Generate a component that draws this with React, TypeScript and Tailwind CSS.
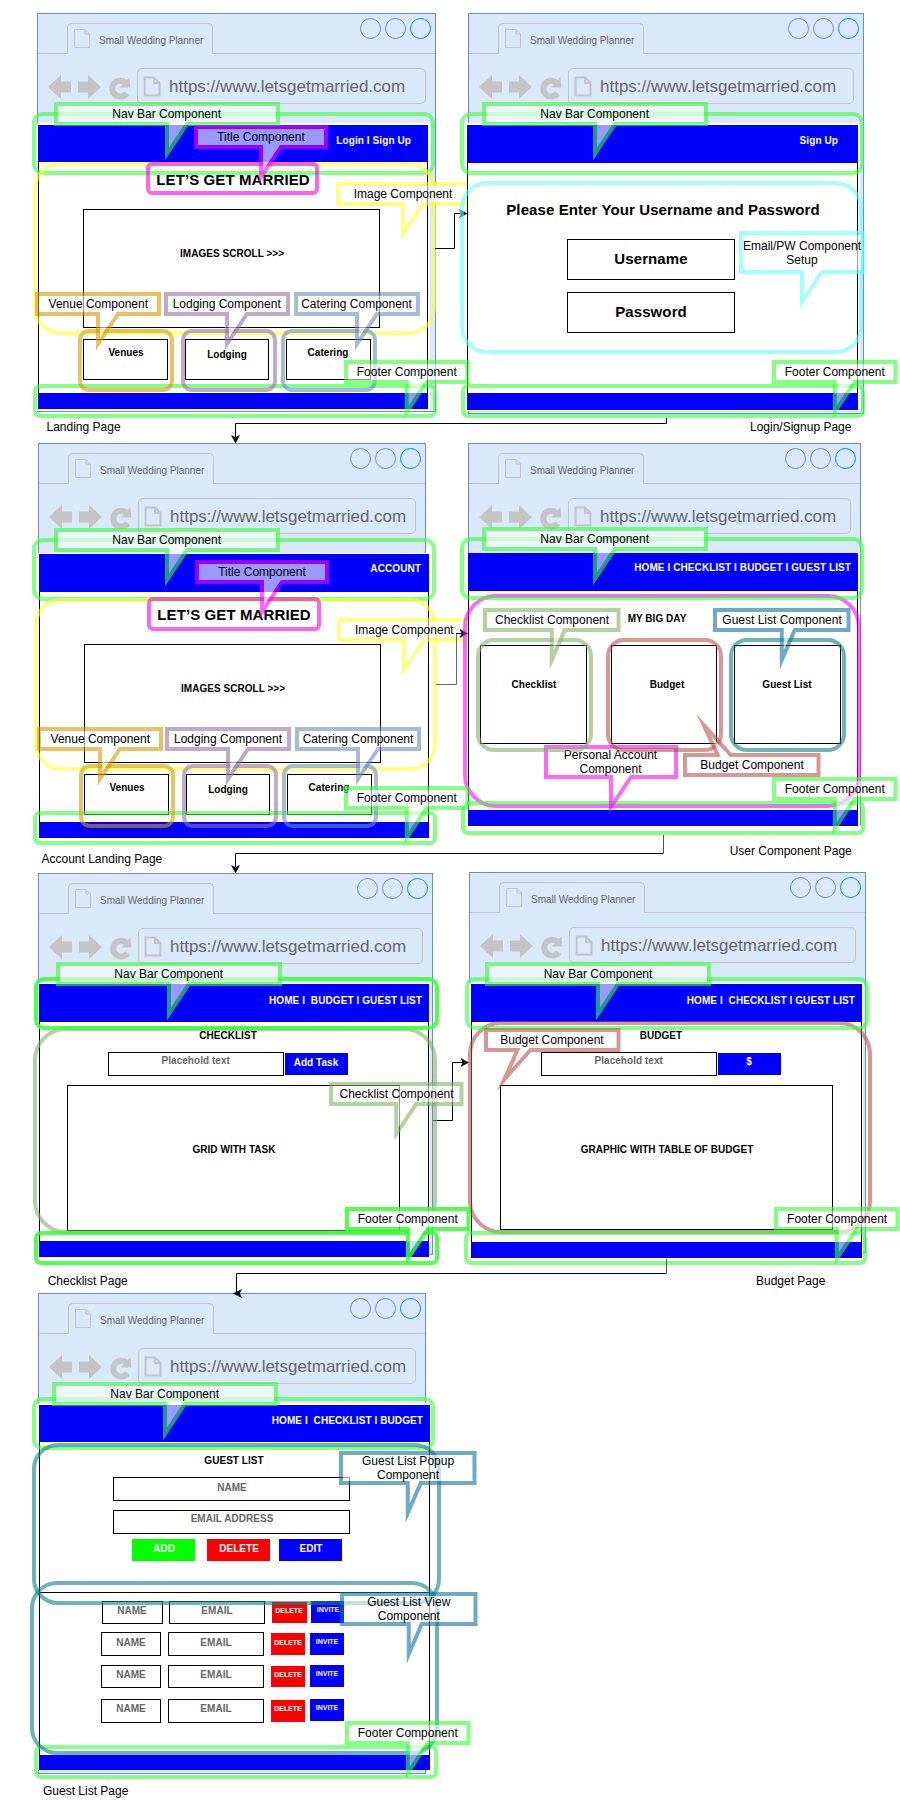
import React from "react";

const GREEN = "#33ff33";
const YELLOW = "#ffff33";
const MAGENTA = "#ff00ff";
const AMBER = "#d79b00";
const PURPLE = "#9673a6";
const STEEL = "#6c8ebf";
const CYAN = "#66ffff";
const OLIVE = "#82b366";
const RED = "#b85450";
const OCEAN = "#10739e";

type At = { at: string };

function DocIcon({ w, h, fold, stroke }: { w: number; h: number; fold: number; stroke: number }) {
  return (
    <svg width={w} height={h} className="block shrink-0 overflow-visible" fill="none" stroke="#c4c4c4" strokeWidth={stroke}>
      <path d={`M.5 .5H${w - fold}L${w - 0.5} ${fold}V${h - 0.5}H.5Z M${w - fold} .5V${fold}H${w - 0.5}`} />
    </svg>
  );
}

function Browser({ at }: At) {
  return (
    <div className={`absolute flex flex-col border border-[#6c8ebf] bg-[#dae8fc] ${at}`}>
      <div className="flex h-[40px] shrink-0">
        <div className="w-[29px] border-b border-[#c4c4c4]" />
        <div className="mt-[9px] flex h-[31px] w-[146px] items-center rounded-t-[5px] border border-b-0 border-[#c4c4c4] pl-[6px] pb-px">
          <DocIcon w={16} h={19} fold={5} stroke={1} />
          <span className="ml-[9px] whitespace-nowrap pt-[4px] text-[10px] leading-3 text-[#666666]">Small Wedding Planner</span>
        </div>
        <div className="flex flex-1 justify-end gap-[4px] border-b border-[#c4c4c4] pr-[4px] pt-[4px]">
          <div className="size-[21px] rounded-full border border-[#6c8ebf]" />
          <div className="size-[21px] rounded-full border border-[#6c8ebf]" />
          <div className="size-[21px] rounded-full border border-[#008cff]" />
        </div>
      </div>
      <div className="flex items-start pl-[10px] pr-[9px] pt-[14px]">
        <svg width="23" height="24" className="mt-[7px] block shrink-0" fill="#c4c4c4">
          <path d="M0 12L13 0V6.5H23V17.5H13V24Z" />
        </svg>
        <svg width="23" height="24" className="ml-[7px] mt-[7px] block shrink-0" fill="#c4c4c4">
          <path d="M23 12L10 0V6.5H0V17.5H10V24Z" />
        </svg>
        <svg width="23" height="24" className="ml-[8px] mt-[8px] block shrink-0" fill="none">
          <path d="M16.3 6.6A7.9 7.9 0 1 0 17.6 17.2" stroke="#c4c4c4" strokeWidth="6" />
          <path d="M20.4 1.2L21.3 11.4H11Z" fill="#c4c4c4" />
        </svg>
        <div className="ml-[5px] flex h-[36px] flex-1 items-center rounded-[5px] border border-[#c4c4c4] pl-[6px]">
          <DocIcon w={16} h={19} fold={6} stroke={2} />
          <span className="ml-[9px] whitespace-nowrap pt-[2px] text-[17px] leading-5 text-[#666666]">https://www.letsgetmarried.com</span>
        </div>
      </div>
    </div>
  );
}

function Page({ cover, at, nav, foot, links }: { cover: string; at: string; nav: string; foot: string; links: string }) {
  return (
    <>
      <div className={`absolute bg-white ${cover}`} />
      <div className={`absolute flex flex-col justify-between border-x border-black bg-white ${at}`}>
        <div className={`-mx-px flex items-start justify-end whitespace-pre bg-[#0000ff] text-[10px] font-bold leading-3 tracking-[0.09px] text-white ${nav}`}>{links}</div>
        <div className={`-mx-px bg-[#0000ff] ${foot}`} />
      </div>
    </>
  );
}

function Box({ at }: At) {
  return <div className={`absolute border border-black bg-white ${at}`} />;
}

function Fill({ at }: At) {
  return <div className={`absolute ${at}`} />;
}

/* Text centred on a point of the canvas. */
function Mid({ at, children }: At & { children: React.ReactNode }) {
  return (
    <div className={`absolute flex h-0 w-0 items-center justify-center whitespace-nowrap text-[10px] font-bold leading-3 tracking-[0.04px] ${at}`}>
      <span className="pt-[2px]">{children}</span>
    </div>
  );
}

function Heading({ at, children }: At & { children: React.ReactNode }) {
  return (
    <div className={`absolute flex h-0 w-0 items-center justify-center whitespace-nowrap text-[15px] font-bold leading-3 tracking-[0.1px] ${at}`}>
      <span>{children}</span>
    </div>
  );
}

function Tiny({ at, children }: At & { children: React.ReactNode }) {
  return (
    <div className={`absolute flex h-0 w-0 items-center justify-center whitespace-nowrap text-[7px] font-bold leading-[8px] text-white ${at}`}>
      <span>{children}</span>
    </div>
  );
}

function Caption({ at, children }: At & { children: React.ReactNode }) {
  return <div className={`absolute whitespace-nowrap text-[12px] leading-[14px] text-black ${at}`}>{children}</div>;
}

function Ring({ at }: At) {
  return <div className={`absolute border-4 ${at}`} />;
}

type CalloutProps = {
  at: string;
  w: number;
  h?: number;
  base?: number;
  color: string;
  lines: string[];
  alpha?: number;
  path?: string;
};

function Callout({ at, w, h = 20, base = 20, color, lines, alpha = 0.6, path }: CalloutProps) {
  const m = w / 2;
  const d = path ?? `M0 0H${w}V${h}H${m + base}L${m} ${h + 30}V${h}H0Z`;
  return (
    <div className={`absolute ${at}`}>
      <svg width={w} height={h} className="block overflow-visible" opacity={alpha}>
        <path d={d} fill="#ffffff" stroke={color} strokeWidth="4" strokeMiterlimit="10" />
      </svg>
      <div className="absolute inset-0 flex flex-col items-center justify-center whitespace-nowrap text-[12px] leading-[14px] text-black">
        {lines.map((l) => (
          <span key={l}>{l}</span>
        ))}
      </div>
    </div>
  );
}

const NavCallout = ({ at }: At) => <Callout at={at} w={222} color={GREEN} lines={["Nav Bar Component"]} />;
const FooterCallout = ({ at, alpha }: At & { alpha?: number }) => (
  <Callout at={at} w={121.5} color={GREEN} alpha={alpha} lines={["Footer Component"]} />
);

function Wire({ d, head, color = "#000" }: { d: string; head?: string; color?: string }) {
  return (
    <svg width="900" height="1800" className="pointer-events-none absolute left-0 top-0">
      <path d={d} fill="none" stroke={color} />
      {head && <path d={head} fill="#000" stroke="#000" strokeWidth="0.5" />}
    </svg>
  );
}

export default function App() {
  return (
    <div className="relative h-[1800px] w-[900px] overflow-hidden bg-white font-['Liberation_Sans',Arial,sans-serif] text-black">
      {/* Landing page */}
      <Browser at="left-[37px] top-[13px] w-[399px] h-[399px]" />
      <Page cover="left-[36px] top-[123px] w-[394px] h-[288px]" at="left-[38px] top-[125px] w-[390px] h-[284px]" nav="h-[37px] pr-[17px] pt-[10px]" foot="h-[16px]" links="Login I Sign Up" />
      <Box at="left-[83px] top-[209px] w-[297px] h-[119px]" />
      <Box at="left-[83px] top-[339px] w-[85px] h-[41px]" />
      <Box at="left-[185px] top-[339px] w-[84px] h-[41px]" />
      <Box at="left-[286px] top-[339px] w-[85px] h-[41px]" />
      <Heading at="left-[233px] top-[180px]">LET’S GET MARRIED</Heading>
      <Mid at="left-[232px] top-[253px]">IMAGES SCROLL &gt;&gt;&gt;</Mid>
      <Mid at="left-[126px] top-[352px]">Venues</Mid>
      <Mid at="left-[227px] top-[354px]">Lodging</Mid>
      <Mid at="left-[328px] top-[352px]">Catering</Mid>
      <Ring at="left-[32px] top-[112px] w-[403px] h-[63px] rounded-[11px] border-[#33ff33]/60" />
      <Ring at="left-[33px] top-[162px] w-[403px] h-[173px] rounded-[27px] border-[#ffff33]/60" />
      <Ring at="left-[146px] top-[162px] w-[173px] h-[33px] rounded-[6px] border-[#f000e6]/60" />
      <Ring at="left-[33px] top-[384px] w-[404px] h-[34px] rounded-[7px] border-[#33ff33]/60" />
      <Ring at="left-[78px] top-[329px] w-[96px] h-[63px] rounded-[11px] border-[#d79b00]/60" />
      <Ring at="left-[181px] top-[329px] w-[96px] h-[63px] rounded-[11px] border-[#9673a6]/60" />
      <Ring at="left-[281px] top-[329px] w-[96px] h-[63px] rounded-[11px] border-[#6c8ebf]/60" />
      <NavCallout at="left-[55.7px] top-[103.6px]" />
      <Callout at="left-[196px] top-[127px]" w={130} color={MAGENTA} lines={["Title Component"]} />
      <Callout at="left-[338px] top-[183.5px]" w={130} color={YELLOW} lines={["Image Component"]} />
      <Callout at="left-[37.3px] top-[293.5px]" w={122} color={AMBER} lines={["Venue Component"]} />
      <Callout at="left-[165.7px] top-[293.5px]" w={122} color={PURPLE} lines={["Lodging Component"]} />
      <Callout at="left-[295.5px] top-[293.5px]" w={122} color={STEEL} lines={["Catering Component"]} />
      <Caption at="left-[46.5px] top-[420px]">Landing Page</Caption>

      {/* Login / signup page */}
      <Browser at="left-[468px] top-[13px] w-[396px] h-[401px]" />
      <Page cover="left-[467px] top-[123px] w-[393px] h-[288px]" at="left-[467px] top-[125px] w-[391px] h-[285px]" nav="h-[38px] pr-[20px] pt-[10px]" foot="h-[17px]" links="Sign Up" />
      <Box at="left-[567px] top-[239px] w-[168px] h-[41px]" />
      <Box at="left-[567px] top-[292px] w-[168px] h-[41px]" />
      <Heading at="left-[663px] top-[210px]">Please Enter Your Username and Password</Heading>
      <Heading at="left-[651px] top-[259px]">Username</Heading>
      <Heading at="left-[651px] top-[312px]">Password</Heading>
      <Wire d="M435 248.5H454.5V213.5H462" head="M467 213.5L459.5 209.5L461.5 213.5L459.5 217.5Z" />
      <Ring at="left-[460px] top-[112px] w-[404px] h-[63px] rounded-[11px] border-[#33ff33]/60" />
      <Ring at="left-[460px] top-[181px] w-[403px] h-[173px] rounded-[27px] border-[#66ffff]/60" />
      <Ring at="left-[461px] top-[384px] w-[404px] h-[34px] rounded-[7px] border-[#33ff33]/60" />
      <NavCallout at="left-[483.7px] top-[103.6px]" />
      <Callout at="left-[741px] top-[233px]" w={122} h={39} color={CYAN} lines={["Email/PW Component", "Setup"]} />
      <FooterCallout at="left-[346px] top-[362px]" />
      <FooterCallout at="left-[774px] top-[361.5px]" />
      <Caption at="left-[750px] top-[420px]">Login/Signup Page</Caption>

      {/* Account landing page */}
      <Browser at="left-[38px] top-[443px] w-[388px] h-[392px]" />
      <Page cover="left-[37px] top-[553px] w-[393px] h-[287px]" at="left-[39px] top-[554px] w-[390px] h-[284px]" nav="h-[38px] pr-[8px] pt-[9px]" foot="h-[16px]" links="ACCOUNT" />
      <Wire d="M666.5 418V423.5H235.5V437" head="M235.5 443L231.5 435.5L235.5 437.5L239.5 435.5Z" />
      <Box at="left-[84px] top-[644px] w-[297px] h-[119px]" />
      <Box at="left-[84px] top-[774px] w-[85px] h-[41px]" />
      <Box at="left-[186px] top-[774px] w-[84px] h-[41px]" />
      <Box at="left-[287px] top-[774px] w-[85px] h-[41px]" />
      <Heading at="left-[234px] top-[615px]">LET’S GET MARRIED</Heading>
      <Mid at="left-[233px] top-[688px]">IMAGES SCROLL &gt;&gt;&gt;</Mid>
      <Mid at="left-[127px] top-[787px]">Venues</Mid>
      <Mid at="left-[228px] top-[789px]">Lodging</Mid>
      <Mid at="left-[329px] top-[787px]">Catering</Mid>
      <Ring at="left-[32px] top-[538px] w-[404px] h-[63px] rounded-[11px] border-[#33ff33]/60" />
      <Ring at="left-[34px] top-[598px] w-[403px] h-[173px] rounded-[27px] border-[#ffff33]/60" />
      <Ring at="left-[147px] top-[597px] w-[174px] h-[34px] rounded-[6px] border-[#f000e6]/60" />
      <Ring at="left-[33px] top-[811px] w-[404px] h-[34px] rounded-[7px] border-[#33ff33]/60" />
      <Ring at="left-[79px] top-[764px] w-[96px] h-[64px] rounded-[11px] border-[#d79b00]/60" />
      <Ring at="left-[182px] top-[764px] w-[96px] h-[64px] rounded-[11px] border-[#9673a6]/60" />
      <Ring at="left-[282px] top-[764px] w-[96px] h-[64px] rounded-[11px] border-[#6c8ebf]/60" />
      <NavCallout at="left-[55.7px] top-[529.6px]" />
      <Callout at="left-[197px] top-[562px]" w={130} color={MAGENTA} lines={["Title Component"]} />
      <Callout at="left-[339.3px] top-[619.6px]" w={130} color={YELLOW} lines={["Image Component"]} />
      <Callout at="left-[39.3px] top-[729px]" w={122} color={AMBER} lines={["Venue Component"]} />
      <Callout at="left-[167px] top-[729px]" w={122} color={PURPLE} lines={["Lodging Component"]} />
      <Callout at="left-[297px] top-[729px]" w={122} color={STEEL} lines={["Catering Component"]} />
      <Caption at="left-[41.5px] top-[852px]">Account Landing Page</Caption>

      {/* User component page */}
      <Browser at="left-[468px] top-[443px] w-[393px] h-[382px]" />
      <Page cover="left-[467px] top-[553px] w-[393px] h-[274px]" at="left-[468px] top-[553px] w-[390px] h-[273px]" nav="h-[38px] pr-[7px] pt-[9px]" foot="h-[16px]" links="HOME I CHECKLIST I BUDGET I GUEST LIST" />
      <Wire d="M436 684.5H456.5V633.5" color="#666" />
      <Wire d="M456 633.5H462" head="M467.5 633.5L460 629.5L462 633.5L460 637.5Z" />
      <Box at="left-[480px] top-[645px] w-[107px] h-[99px]" />
      <Box at="left-[611px] top-[645px] w-[106px] h-[99px]" />
      <Box at="left-[734px] top-[645px] w-[107px] h-[99px]" />
      <Mid at="left-[657px] top-[618px]">MY BIG DAY</Mid>
      <Mid at="left-[534px] top-[684px]">Checklist</Mid>
      <Mid at="left-[667px] top-[684px]">Budget</Mid>
      <Mid at="left-[787px] top-[684px]">Guest List</Mid>
      <Ring at="left-[463px] top-[594px] w-[398px] h-[214px] rounded-[33px] border-[#ff00ff]/60" />
      <Ring at="left-[460px] top-[537px] w-[404px] h-[63px] rounded-[11px] border-[#33ff33]/60" />
      <Ring at="left-[461px] top-[801px] w-[404px] h-[34px] rounded-[7px] border-[#33ff33]/60" />
      <NavCallout at="left-[483.7px] top-[528.6px]" />
      <Callout at="left-[545.5px] top-[747px]" w={130} h={30} color={MAGENTA} lines={["Personal Account", "Component"]} />
      <Ring at="left-[476px] top-[638px] w-[117px] h-[114px] rounded-[18px] border-[#82b366]/60" />
      <Ring at="left-[606px] top-[638px] w-[117px] h-[114px] rounded-[18px] border-[#b85450]/60" />
      <Ring at="left-[729px] top-[638px] w-[117px] h-[114px] rounded-[18px] border-[#0e8088]/60" />
      <Callout at="left-[485.3px] top-[610.3px]" w={133.5} base={13} color={OLIVE} lines={["Checklist Component"]} />
      <Callout at="left-[715.3px] top-[610.3px]" w={133.5} base={13} color={OCEAN} lines={["Guest List Component"]} />
      <Callout at="left-[685.3px] top-[754.7px]" w={133.5} color={RED} lines={["Budget Component"]} path="M0 0H32.7L18.7 -30L45.7 0H133.5V20H0Z" />
      <FooterCallout at="left-[346px] top-[787.7px]" />
      <FooterCallout at="left-[774px] top-[778.6px]" />
      <Caption at="left-[729.7px] top-[844px]">User Component Page</Caption>

      {/* Checklist page */}
      <Browser at="left-[38px] top-[873px] w-[395px] h-[382px]" />
      <Page cover="left-[37px] top-[983px] w-[393px] h-[275px]" at="left-[39px] top-[984px] w-[390px] h-[273px]" nav="h-[38px] pr-[7px] pt-[11px]" foot="h-[16px]" links="HOME I  BUDGET I GUEST LIST" />
      <Wire d="M663.5 835V853" color="#555" />
      <Wire d="M663.5 853.5H235.5V867" head="M235.5 873L231.5 865.5L235.5 867.5L239.5 865.5Z" />
      <Box at="left-[108px] top-[1052px] w-[176px] h-[24px]" />
      <Fill at="left-[285px] top-[1053px] w-[63px] h-[22px] bg-[#0000ff]" />
      <Box at="left-[67px] top-[1085px] w-[333px] h-[146px]" />
      <Mid at="left-[228px] top-[1035px]">CHECKLIST</Mid>
      <Mid at="left-[195.7px] top-[1060px] text-[#666666]">Placehold text</Mid>
      <Mid at="left-[316px] top-[1062px] text-white">Add Task</Mid>
      <Mid at="left-[234px] top-[1149px]">GRID WITH TASK</Mid>
      <Wire d="M433 1120.5H452.5V1062.5H463" head="M468.5 1062.5L461 1058.5L463 1062.5L461 1066.5Z" />
      <Ring at="left-[33px] top-[1027px] w-[404px] h-[207px] rounded-[33px] border-[#82b366]/60" />
      <Ring at="left-[34px] top-[977px] w-[405px] h-[53px] rounded-[10px] border-[#33ff33]/85" />
      <Ring at="left-[34px] top-[1231px] w-[405px] h-[34px] rounded-[7px] border-[#33ff33]/85" />
      <NavCallout at="left-[57.7px] top-[963.6px]" />
      <Callout at="left-[331.3px] top-[1083.7px]" w={130.5} color={OLIVE} lines={["Checklist Component"]} />
      <Caption at="left-[47.7px] top-[1274px]">Checklist Page</Caption>

      {/* Budget page */}
      <Browser at="left-[469px] top-[872px] w-[397px] h-[381px]" />
      <Page cover="left-[469px] top-[983px] w-[394px] h-[276px]" at="left-[471px] top-[984px] w-[391px] h-[274px]" nav="h-[38px] pr-[7px] pt-[11px]" foot="h-[16px]" links="HOME I  CHECKLIST I GUEST LIST" />
      <Box at="left-[541px] top-[1052px] w-[176px] h-[24px]" />
      <Fill at="left-[718px] top-[1053px] w-[63px] h-[22px] bg-[#0000ff]" />
      <Box at="left-[500px] top-[1085px] w-[333px] h-[145px]" />
      <Mid at="left-[661px] top-[1035px]">BUDGET</Mid>
      <Mid at="left-[628.7px] top-[1060px] text-[#666666]">Placehold text</Mid>
      <Mid at="left-[749px] top-[1061px] text-white">$</Mid>
      <Mid at="left-[667px] top-[1149px]">GRAPHIC WITH TABLE OF BUDGET</Mid>
      <Ring at="left-[468px] top-[1021px] w-[404px] h-[213px] rounded-[33px] border-[#b85450]/60" />
      <Ring at="left-[465px] top-[977px] w-[404px] h-[53px] rounded-[10px] border-[#33ff33]/60" />
      <Ring at="left-[464px] top-[1231px] w-[403px] h-[34px] rounded-[7px] border-[#33ff33]/60" />
      <NavCallout at="left-[487px] top-[963.6px]" />
      <Callout at="left-[485.7px] top-[1030px]" w={132.5} color={RED} lines={["Budget Component"]} path="M0 0H132.5V20H44.5L18 50L31.5 20H0Z" />
      <FooterCallout at="left-[347px] top-[1208.6px]" alpha={0.85} />
      <FooterCallout at="left-[776.4px] top-[1208.6px]" />
      <Caption at="left-[756px] top-[1274px]">Budget Page</Caption>

      {/* Guest list page */}
      <Browser at="left-[38px] top-[1293px] w-[388px] h-[481px]" />
      <Page cover="left-[37px] top-[1403px] w-[394px] h-[367px]" at="left-[39px] top-[1405px] w-[391px] h-[365px]" nav="h-[37px] pr-[7px] pt-[10px]" foot="h-[15px]" links="HOME I  CHECKLIST I BUDGET" />
      <Wire d="M666.5 1259V1273" color="#555" />
      <Wire d="M666.5 1273.5H236.5V1293" head="M233.5 1293.5L241.5 1289.5L239.5 1293.5L241.5 1297.5Z" />
      <Fill at="left-[39px] top-[1592px] w-[390px] h-px bg-black" />
      <Box at="left-[113px] top-[1477px] w-[237px] h-[24px]" />
      <Box at="left-[113px] top-[1510px] w-[237px] h-[24px]" />
      <Fill at="left-[132px] top-[1539px] w-[63px] h-[22px] bg-[#00ff00]" />
      <Fill at="left-[207px] top-[1539px] w-[63px] h-[22px] bg-[#ff0000]" />
      <Fill at="left-[279px] top-[1539px] w-[63px] h-[22px] bg-[#0000ff]" />
      <Mid at="left-[234px] top-[1460px]">GUEST LIST</Mid>
      <Mid at="left-[232px] top-[1487px] text-[#666666]">NAME</Mid>
      <Mid at="left-[232px] top-[1518px] text-[#666666]">EMAIL ADDRESS</Mid>
      <Mid at="left-[164px] top-[1548px] text-white">ADD</Mid>
      <Mid at="left-[239px] top-[1548px] text-white">DELETE</Mid>
      <Mid at="left-[311px] top-[1548px] text-white">EDIT</Mid>

      <Box at="left-[102px] top-[1601px] w-[61px] h-[23px]" />
      <Box at="left-[169px] top-[1601px] w-[96px] h-[23px]" />
      <Fill at="left-[272px] top-[1602px] w-[35px] h-[21px] bg-[#ff0000]" />
      <Fill at="left-[311px] top-[1601px] w-[33px] h-[22px] bg-[#0000ff]" />
      <Mid at="left-[132px] top-[1610px] text-[#666666]">NAME</Mid>
      <Mid at="left-[217px] top-[1610px] text-[#666666]">EMAIL</Mid>
      <Tiny at="left-[289px] top-[1611px]">DELETE</Tiny>
      <Tiny at="left-[328px] top-[1610px]">INVITE</Tiny>

      <Box at="left-[101px] top-[1632px] w-[60px] h-[24px]" />
      <Box at="left-[168px] top-[1632px] w-[96px] h-[24px]" />
      <Fill at="left-[271px] top-[1633px] w-[34px] h-[22px] bg-[#ff0000]" />
      <Fill at="left-[310px] top-[1633px] w-[34px] h-[22px] bg-[#0000ff]" />
      <Mid at="left-[131px] top-[1642px] text-[#666666]">NAME</Mid>
      <Mid at="left-[216px] top-[1642px] text-[#666666]">EMAIL</Mid>
      <Tiny at="left-[288px] top-[1643px]">DELETE</Tiny>
      <Tiny at="left-[327px] top-[1642px]">INVITE</Tiny>

      <Box at="left-[101px] top-[1665px] w-[60px] h-[23px]" />
      <Box at="left-[168px] top-[1665px] w-[96px] h-[23px]" />
      <Fill at="left-[271px] top-[1666px] w-[34px] h-[21px] bg-[#ff0000]" />
      <Fill at="left-[310px] top-[1665px] w-[34px] h-[22px] bg-[#0000ff]" />
      <Mid at="left-[131px] top-[1674px] text-[#666666]">NAME</Mid>
      <Mid at="left-[216px] top-[1674px] text-[#666666]">EMAIL</Mid>
      <Tiny at="left-[288px] top-[1675px]">DELETE</Tiny>
      <Tiny at="left-[327px] top-[1674px]">INVITE</Tiny>

      <Box at="left-[101px] top-[1699px] w-[60px] h-[24px]" />
      <Box at="left-[168px] top-[1699px] w-[96px] h-[24px]" />
      <Fill at="left-[271px] top-[1700px] w-[34px] h-[22px] bg-[#ff0000]" />
      <Fill at="left-[310px] top-[1699px] w-[34px] h-[22px] bg-[#0000ff]" />
      <Mid at="left-[131px] top-[1708px] text-[#666666]">NAME</Mid>
      <Mid at="left-[216px] top-[1708px] text-[#666666]">EMAIL</Mid>
      <Tiny at="left-[288px] top-[1709px]">DELETE</Tiny>
      <Tiny at="left-[327px] top-[1708px]">INVITE</Tiny>

      <Ring at="left-[32px] top-[1397px] w-[403px] h-[53px] rounded-[10px] border-[#33ff33]/60" />
      <Ring at="left-[34px] top-[1745px] w-[404px] h-[34px] rounded-[7px] border-[#33ff33]/60" />
      <Ring at="left-[32px] top-[1443px] w-[409px] h-[162px] rounded-[26px] border-[#0e8088]/60" />
      <Ring at="left-[30px] top-[1581px] w-[409px] h-[174px] rounded-[27px] border-[#0e8088]/60" />
      <NavCallout at="left-[53.7px] top-[1383.6px]" />
      <Callout at="left-[341.3px] top-[1453.3px]" w={133.5} h={30} base={13} color={OCEAN} lines={["Guest List Popup", "Component"]} />
      <Callout at="left-[342px] top-[1593.7px]" w={133.5} h={30} base={13} color={OCEAN} lines={["Guest List View", "Component"]} />
      <FooterCallout at="left-[347px] top-[1722.7px]" />
      <Caption at="left-[43px] top-[1784px]">Guest List Page</Caption>
    </div>
  );
}
